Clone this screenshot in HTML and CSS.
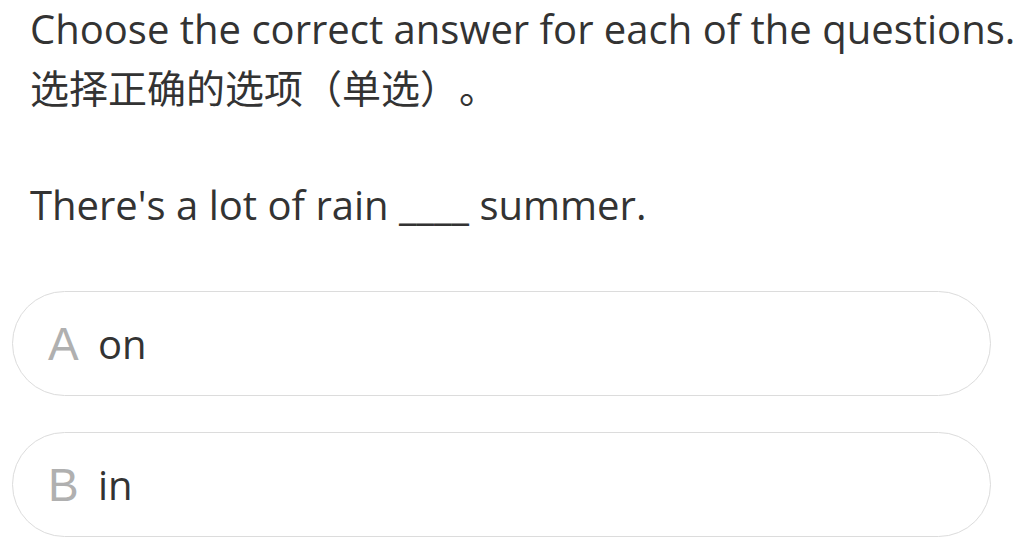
FILE: index.html
```html
<!DOCTYPE html>
<html lang="zh">
<head>
<meta charset="utf-8">
<link rel="stylesheet" href="styles.css">
</head>
<body>
<div class="page">
  <div class="instructions">
    <p class="line">Choose the correct answer for each of the questions.</p>
    <p class="line cjk">选择正确的选项（单选）。</p>
  </div>
  <p class="question">There's a lot of rain ____ summer.</p>
  <div class="options">
    <div class="option"><span class="letter">A</span><span class="text">on</span></div>
    <div class="option"><span class="letter">B</span><span class="text">in</span></div>
  </div>
</div>
</body>
</html>
```
FILE: styles.css
```css
html, body {
  margin: 0;
  padding: 0;
  background: #fff;
}
.page {
  font-family: "Open Sans", "Noto Sans CJK SC", sans-serif;
  font-size: 40px;
  color: #333;
}
.instructions {
  padding-left: 30px;
}
.line {
  margin: 0;
  height: 58px;
  line-height: 58px;
  white-space: nowrap;
}
.cjk {
  font-size: 39px;
  line-height: 60px;
  text-spacing-trim: space-all;
}
.question {
  margin: 60px 0 0 0;
  padding-left: 30px;
  height: 58px;
  line-height: 58px;
}
.options {
  margin: 57px 0 0 12px;
  width: 979px;
  display: flex;
  flex-direction: column;
  gap: 36px;
}
.option {
  box-sizing: border-box;
  height: 105px;
  border: 1px solid #dcdcdc;
  border-radius: 53px;
  display: flex;
  align-items: center;
  padding-left: 35px;
}
.letter {
  font-family: "Liberation Sans", Arial, sans-serif;
  font-size: 46px;
  color: #b0b0b0;
  width: 50px;
}
.text {
  color: #333;
}
```
